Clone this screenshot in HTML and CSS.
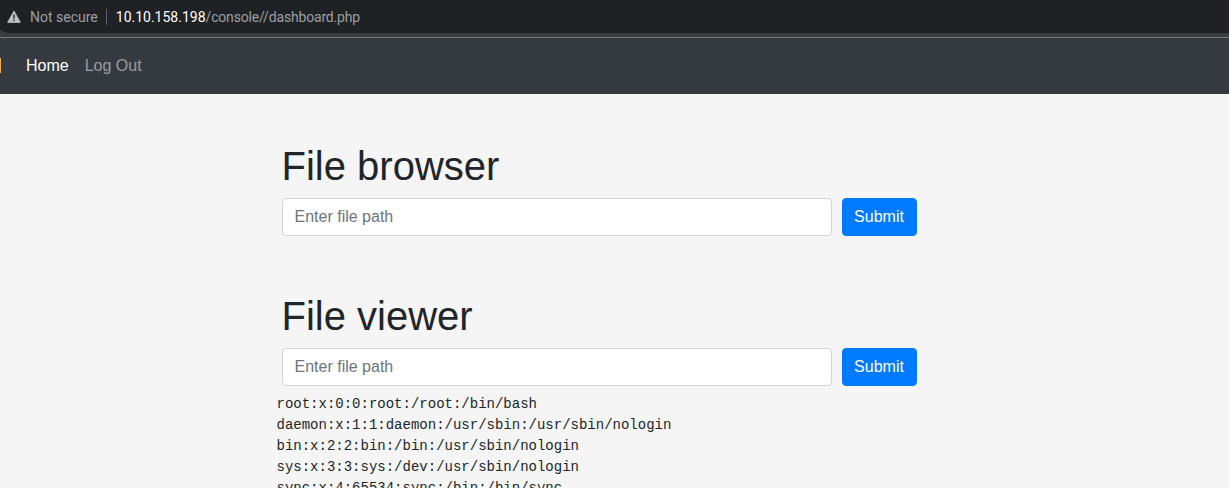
FILE: index.html
```
<!DOCTYPE html>
<html lang="en">
<head>
<meta charset="utf-8">
<title>Dashboard</title>
<link rel="stylesheet" href="styles.css">
</head>
<body>
<div class="chrome">
  <div class="omnibox">
    <svg class="warn" width="14" height="13" viewBox="0 0 14 13"><path d="M7 1 13.4 12.4H.6Z" fill="#bdc1c6" stroke="#bdc1c6" stroke-width=".8" stroke-linejoin="round"/><rect x="6.3" y="4.6" width="1.4" height="4" fill="#202124"/><rect x="6.3" y="9.6" width="1.4" height="1.4" fill="#202124"/></svg>
    <span class="secure">Not secure</span>
    <span class="sep"></span>
    <span class="url"><b>10.10.158.198</b><span class="path">/console//dashboard.php</span></span>
  </div>
</div>
<nav class="navbar">
  <span class="brand-edge"></span>
  <a class="nav-link active">Home</a>
  <a class="nav-link">Log Out</a>
</nav>
<main class="main">
  <section class="block">
    <h1>File browser</h1>
    <form class="row">
      <input class="field" placeholder="Enter file path">
      <button class="btn" type="button">Submit</button>
    </form>
  </section>
  <section class="block second">
    <h1>File viewer</h1>
    <form class="row">
      <input class="field" placeholder="Enter file path">
      <button class="btn" type="button">Submit</button>
    </form>
  </section>
  <pre class="out">root:x:0:0:root:/root:/bin/bash
daemon:x:1:1:daemon:/usr/sbin:/usr/sbin/nologin
bin:x:2:2:bin:/bin:/usr/sbin/nologin
sys:x:3:3:sys:/dev:/usr/sbin/nologin
sync:x:4:65534:sync:/bin:/bin/sync</pre>
</main>
</body>
</html>
```

FILE: styles.css
```
* { box-sizing: border-box; }
html, body { margin: 0; height: 488px; overflow: hidden; }
body { background: #f5f5f5; font-family: "Liberation Sans", Arial, sans-serif; color: #212529; }
.chrome { height: 38px; background: #3b3c3f; border-bottom: 1px solid #77787a; }
.omnibox { height: 33px; margin-left: -6px; width: calc(100% + 6px); background: #202124; border-radius: 0 0 0 16px; display: flex; align-items: center; padding-left: 13px; font-family: Roboto, "Noto Sans", sans-serif; font-size: 14px; }
.warn { flex: none; margin-right: 9px; }
.secure { color: #9aa0a6; }
.sep { width: 1px; height: 16px; background: #5f6368; margin: 0 9px 0 8px; }
.url { color: #9aa0a6; }
.url b { color: #fff; font-weight: 400; }
.path { letter-spacing: -.17px; }
.navbar { height: 56px; padding: 0 0 0 26px; background: #343a40; display: flex; align-items: center; position: relative; gap: 16px; }
.brand-edge { position: absolute; left: 0; top: 20px; width: 1px; height: 15px; background: #f0ad4e; }
.nav-link { font-size: 16px; color: rgba(255,255,255,.5); margin-bottom: 1px; }
.nav-link.active { color: #fff; }
.main { padding: 0 0 0 276.5px; }
.block { padding: 48px 0 0 5px; }
.block.second { padding-top: 56px; }
h1 { margin: 0 0 8px; font-size: 40px; line-height: 48px; font-weight: 400; }
.row { display: flex; gap: 10px; }
.field { width: 550px; height: 38px; padding: 6px 12px; font: 16px "Liberation Sans", Arial, sans-serif; color: #495057; background: #fff; border: 1px solid #ced4da; border-radius: 4px; }
.field::placeholder { color: #6c757d; opacity: 1; }
.btn { width: 75px; height: 38px; font: 16px "Liberation Sans", Arial, sans-serif; color: #fff; background: #007bff; border: 1px solid #007bff; border-radius: 4px; padding: 0; }
.out { margin: 8px 0 0; font: 14px/21px "Liberation Mono", "Courier New", monospace; color: #212529; }
```
